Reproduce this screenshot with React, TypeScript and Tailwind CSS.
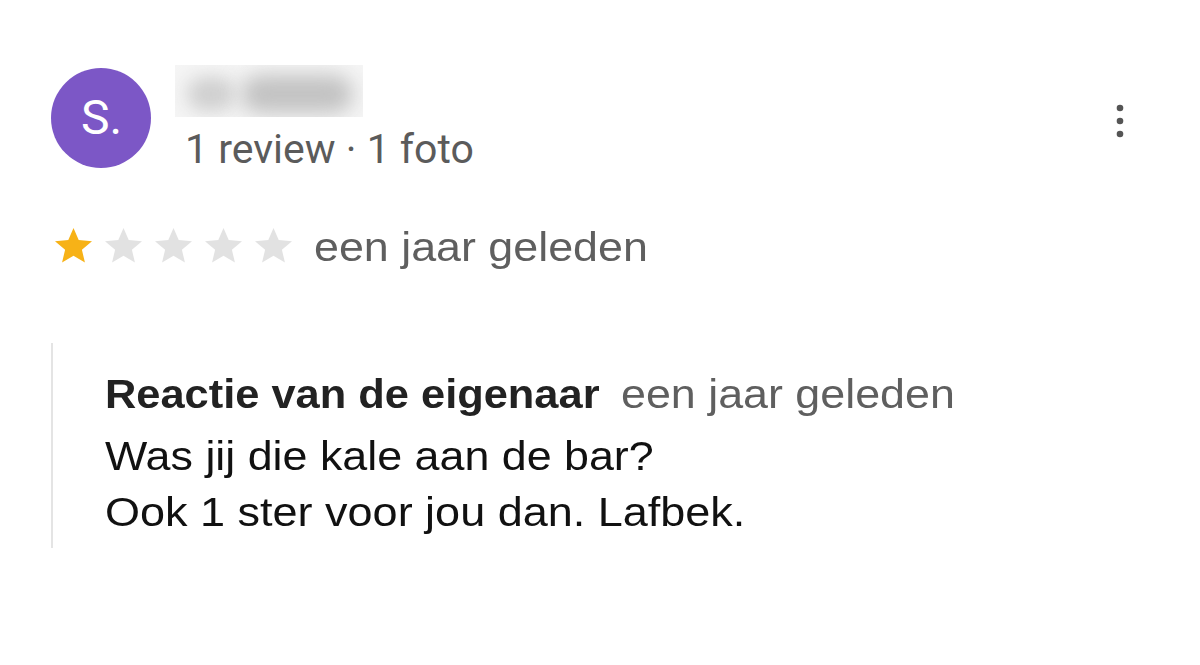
import React from "react";

const STAR = "M12 17.27L18.18 21l-1.64-7.03L22 9.24l-7.19-.61L12 2 9.19 8.63 2 9.24l5.46 4.73L5.82 21z";

function Star({ filled }: { filled: boolean }) {
  return (
    <svg width="37" height="35" viewBox="2 2 20 19.3" preserveAspectRatio="none" className="shrink-0">
      <path d={STAR} fill={filled ? "#f7b217" : "#e2e2e2"} />
    </svg>
  );
}

export default function App() {
  const sans = { fontFamily: '"Liberation Sans", Arial, sans-serif' };
  return (
    <div className="w-[1200px] h-[665px] bg-white overflow-hidden pl-[51px] pr-[68px] pt-[65px]" style={sans}>
      {/* header row */}
      <div className="flex items-start">
        <div className="mt-[3px] w-[100px] h-[100px] rounded-full bg-[#7c57c6] flex items-center justify-center shrink-0">
          <span className="text-white text-[48px] leading-none pb-[1px] pl-[1px]" style={{ fontFamily: "Roboto, sans-serif" }}>S.</span>
        </div>
        <div className="ml-[24px] flex flex-col">
          <div className="relative w-[188px] h-[52px] bg-[#f5f5f5] overflow-hidden">
            <div className="absolute left-[12px] top-[12px] w-[48px] h-[34px] rounded-full bg-[#cfcfcf] blur-[9px]" />
            <div className="absolute left-[66px] top-[10px] w-[112px] h-[38px] rounded-full bg-[#c2c2c2] blur-[10px]" />
          </div>
          <div
            className="mt-[8px] ml-[10px] text-[41px] leading-[48px] text-[#5b5b5b] whitespace-nowrap"
            style={{ fontFamily: "Roboto, sans-serif" }}
          >
            1 review · 1 foto
          </div>
        </div>
        <div className="ml-auto mt-[36px]">
          <svg width="24" height="40" viewBox="0 0 24 40">
            <circle cx="12" cy="7" r="3.3" fill="#555" />
            <circle cx="12" cy="20" r="3.3" fill="#555" />
            <circle cx="12" cy="33" r="3.3" fill="#555" />
          </svg>
        </div>
      </div>

      {/* rating row */}
      <div className="flex items-start mt-[50px]">
        <div className="flex gap-[13px] mt-[5px] ml-[4px]">
          <Star filled />
          <Star filled={false} />
          <Star filled={false} />
          <Star filled={false} />
          <Star filled={false} />
        </div>
        <span className="ml-[22px] inline-block origin-left scale-x-[1.12] text-[40px] leading-[48px] text-[#5f5f5f] whitespace-nowrap">
          een jaar geleden
        </span>
      </div>

      {/* owner reply */}
      <div className="mt-[72px] border-l-2 border-[#e4e4e4] pl-[52px] pt-[23px] pb-[8px]">
        <div className="flex items-start mb-[6px] whitespace-nowrap">
          <span className="inline-block origin-left scale-x-[1.085] text-[40px] leading-[56px] font-bold text-[#222]">
            Reactie van de eigenaar
          </span>
          <span className="ml-[60px] inline-block origin-left scale-x-[1.12] text-[40px] leading-[56px] text-[#5f5f5f]">
            een jaar geleden
          </span>
        </div>
        <div className="text-[40px] leading-[56px] text-[#111] whitespace-nowrap">
          <div className="inline-block origin-left scale-x-[1.12]">Was jij die kale aan de bar?</div>
          <br />
          <div className="inline-block origin-left scale-x-[1.125]">Ook 1 ster voor jou dan. Lafbek.</div>
        </div>
      </div>
    </div>
  );
}
